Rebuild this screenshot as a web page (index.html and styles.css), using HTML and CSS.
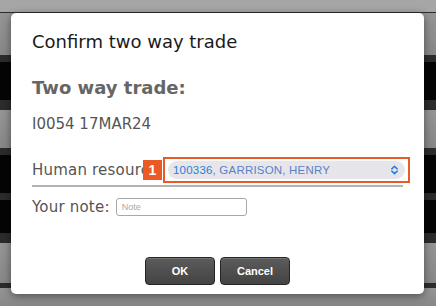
FILE: index.html
```html
<!DOCTYPE html>
<html lang="en">
<head>
    <meta charset="UTF-8">
    <meta name="viewport" content="width=device-width, initial-scale=1.0">
    <title>Confirm two way trade</title>
    <link rel="stylesheet" href="styles.css">
</head>
<body>
    <div class="backdrop">
        <div class="band light" style="height: 12px"></div>
        <div class="band edge" style="height: 1px"></div>
        <div class="band gray" style="height: 42px"></div>
        <div class="band edge" style="height: 7px"></div>
        <div class="band black" style="height: 38px"></div>
        <div class="band edge" style="height: 10px"></div>
        <div class="band gray" style="height: 38px"></div>
        <div class="band edge" style="height: 7px"></div>
        <div class="band black" style="height: 38px"></div>
        <div class="band edge" style="height: 7px"></div>
        <div class="band black" style="height: 33px"></div>
        <div class="band edge" style="height: 10px"></div>
        <div class="band gray" style="height: 40px"></div>
        <div class="band edge" style="height: 5px"></div>
        <div class="band gray" style="height: 18px"></div>
    </div>

    <div class="dialog">
        <h2 class="dialog-title">Confirm two way trade</h2>

        <h3 class="section-title">Two way trade:</h3>
        <p class="trade-code">I0054 17MAR24</p>

        <div class="field-row resource-row">
            <label class="field-label" for="resource">Human resource</label>
            <div class="highlight">
                <span class="badge">1</span>
                <div class="select-box" id="resource">
                    <span class="select-text"><span class="select-id">100336</span>, GARRISON, HENRY</span>
                    <svg class="select-arrows" width="9" height="10" viewBox="0 0 9 10">
                        <path d="M1.8 3.8 L4.5 1.4 L7.2 3.8 M1.8 6.2 L4.5 8.6 L7.2 6.2" fill="none" stroke="#2f7fd8" stroke-width="1.6" stroke-linecap="round" stroke-linejoin="round"/>
                    </svg>
                </div>
            </div>
        </div>
        <div class="divider"></div>

        <div class="field-row note-row">
            <label class="field-label" for="note">Your note:</label>
            <input type="text" id="note" class="note-input" placeholder="Note">
        </div>

        <div class="actions">
            <button class="btn">OK</button>
            <button class="btn">Cancel</button>
        </div>
    </div>
</body>
</html>
```

FILE: styles.css
```css
* {
    margin: 0;
    padding: 0;
    box-sizing: border-box;
}

body {
    width: 436px;
    height: 306px;
    overflow: hidden;
    position: relative;
    font-family: 'DejaVu Sans', Verdana, sans-serif;
    background: #8e8e8e;
}

.backdrop {
    display: flex;
    flex-direction: column;
}

.band.light {
    background: #a6a6a6;
}

.band.edge {
    background: #2c2c2c;
}

.band.gray {
    background: linear-gradient(#959595, #878787);
}

.band.black {
    background: #050505;
}

.dialog {
    position: absolute;
    left: 11px;
    top: 13px;
    width: 413px;
    height: 281px;
    background: #fff;
    border-radius: 5px;
    box-shadow: 0 2px 8px rgba(0, 0, 0, 0.45);
    padding: 18px 21px 0 21px;
    display: flex;
    flex-direction: column;
}

.dialog-title {
    font-size: 18px;
    font-weight: normal;
    color: #1a1a1a;
    line-height: 22px;
}

.section-title {
    margin-top: 24px;
    font-size: 18px;
    font-weight: bold;
    color: #666;
    line-height: 22px;
}

.trade-code {
    margin-top: 16px;
    font-size: 15px;
    color: #555;
    line-height: 18px;
}

.field-row {
    display: flex;
    align-items: center;
}

.resource-row {
    margin-top: 28px;
    height: 18px;
    position: relative;
}

.field-label {
    font-size: 15px;
    color: #555;
    white-space: nowrap;
    letter-spacing: 0.2px;
}

.resource-row .field-label {
    width: 111px;
    overflow: hidden;
}

.highlight {
    position: absolute;
    left: 111px;
    top: 50%;
    transform: translateY(-50%);
    display: flex;
    align-items: center;
}

.badge {
    width: 19px;
    height: 20px;
    background: #ea5a26;
    color: #fff;
    font-family: 'Liberation Sans', Arial, sans-serif;
    font-weight: bold;
    font-size: 14px;
    display: flex;
    align-items: center;
    justify-content: center;
}

.select-box {
    margin-left: 1px;
    width: 247px;
    height: 26px;
    border: 2px solid #ea5a26;
    padding: 2px 3px;
    display: flex;
}

.select-text {
    flex: 1;
    display: flex;
    align-items: center;
    background: #e6e6ea;
    border-radius: 9px 0 0 9px;
    padding-left: 5px;
    font-family: 'Liberation Sans', Arial, sans-serif;
    font-size: 11.5px;
    letter-spacing: 0.2px;
    color: #5a80c8;
}

.select-id {
    color: #2a7fd6;
}

.select-arrows {
    box-sizing: content-box;
    background: #e6e6ea;
    border-radius: 0 9px 9px 0;
    padding: 4px 6px 4px 2px;
}

.divider {
    margin-top: 6px;
    height: 2px;
    width: 371px;
    background: #b4b4b4;
}

.note-row {
    margin-top: 11px;
}

.note-input {
    margin-left: 6px;
    width: 131px;
    height: 18px;
    border: 1px solid #a8a8a8;
    border-radius: 3px;
    padding: 0 5px;
    font-family: 'Liberation Sans', Arial, sans-serif;
    font-size: 9px;
    outline: none;
}

.note-input::placeholder {
    color: #aaa;
}

.actions {
    margin-top: auto;
    margin-bottom: 9px;
    display: flex;
    justify-content: center;
    gap: 5px;
}

.btn {
    width: 70px;
    height: 28px;
    background: linear-gradient(#5c5c5c, #434343);
    border: 1px solid #262626;
    border-radius: 4px;
    color: #fff;
    font-family: 'Liberation Sans', Arial, sans-serif;
    font-weight: bold;
    font-size: 11px;
    box-shadow: inset 0 1px 0 rgba(255, 255, 255, 0.15);
}
```
